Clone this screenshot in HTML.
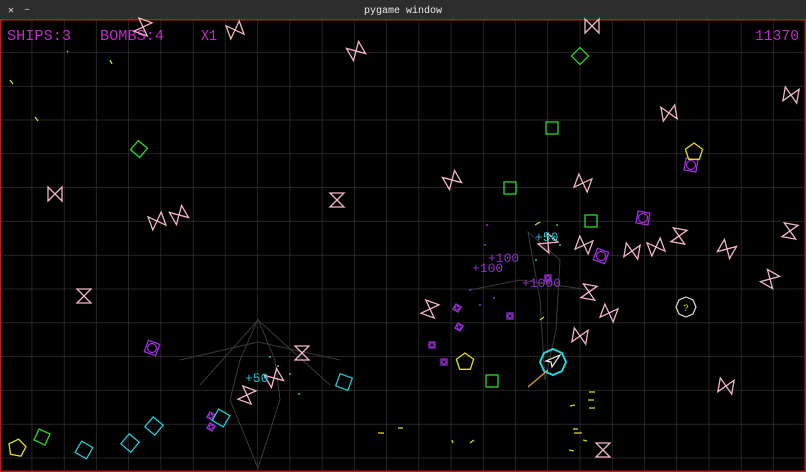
<!DOCTYPE html>
<html><head><meta charset="utf-8"><style>
html,body{margin:0;padding:0;background:#000;width:806px;height:472px;overflow:hidden}
svg{display:block}
text{font-family:"Liberation Mono",monospace}
</style></head><body>
<svg width="806" height="472" viewBox="0 0 806 472" xmlns="http://www.w3.org/2000/svg">
<defs>
<pattern id="grid" x="0" y="18.9" width="32.24" height="33.8" patternUnits="userSpaceOnUse">
<path d="M32.24 0V33.8M0 33.8H32.24" stroke="#3a3a3a" stroke-width="1.2" fill="none"/>
</pattern>
<g id="bt"><path d="M-7 -7L7 -7L-7 7L7 7Z" fill="none" stroke="#f2b6c6" stroke-width="1.3"/></g>
<g id="gs"><rect x="-6" y="-6" width="12" height="12" fill="none" stroke="#2ed62e" stroke-width="1.3"/></g>
<g id="cs"><rect x="-6.5" y="-6.5" width="13" height="13" fill="none" stroke="#22c8d0" stroke-width="1.3"/></g>
<g id="ps"><rect x="-6" y="-6" width="12" height="12" fill="none" stroke="#a030e0" stroke-width="1.3"/><circle r="4.5" fill="none" stroke="#a030e0" stroke-width="1.2"/></g>
<g id="pss"><rect x="-3" y="-3" width="6" height="6" fill="none" stroke="#a030e0" stroke-width="1.2"/><circle r="2" fill="none" stroke="#a030e0"/></g>
<g id="yp"><path d="M0 -9L8.6 -2.8L5.3 7.3L-5.3 7.3L-8.6 -2.8Z" fill="none" stroke="#e0e020" stroke-width="1.3"/></g>
</defs>
<rect width="806" height="472" fill="#000"/>
<rect x="0" y="20" width="806" height="452" fill="url(#grid)"/>
<g stroke="#3a3a3a" fill="none" stroke-width="1">
<path d="M258 319L240 360L230 400L258 468L280 400L275 360Z"/>
<path d="M180 360L258 342L340 360"/>
<path d="M200 385L258 320L330 385"/>
<path d="M528 232L540 300L545 380L556 330L560 260Z"/>
<path d="M470 290L520 280L590 290"/>
</g>
<rect x="0" y="0" width="806" height="19" fill="#2d2d2d"/>
<text x="8" y="13" fill="#ddd" font-size="10" font-family="Liberation Sans">✕</text>
<text x="24" y="12" fill="#ddd" font-size="10" font-family="Liberation Sans">–</text>
<text x="403" y="13" fill="#e8e8e8" font-size="10" text-anchor="middle" font-family="Liberation Sans,sans-serif">pygame window</text>
<rect x="0.75" y="19.75" width="804.5" height="451.5" fill="none" stroke="#b41e1e" stroke-width="1.5"/>
<g fill="#c02cc8" font-size="15">
<text x="7" y="40" textLength="64" lengthAdjust="spacingAndGlyphs">SHIPS:3</text>
<text x="100" y="40" textLength="64" lengthAdjust="spacingAndGlyphs">BOMBS:4</text>
<text x="201" y="40" textLength="16" lengthAdjust="spacingAndGlyphs">X1</text>
<text x="755" y="40" textLength="44" lengthAdjust="spacingAndGlyphs">11370</text>
</g>
<use href="#bt" transform="translate(143,27) rotate(20)"/>
<use href="#bt" transform="translate(235,30) rotate(70)"/>
<use href="#bt" transform="translate(356,51) rotate(60)"/>
<use href="#bt" transform="translate(592,26) rotate(90)"/>
<use href="#bt" transform="translate(791,95) rotate(100)"/>
<use href="#bt" transform="translate(669,113) rotate(80)"/>
<use href="#bt" transform="translate(55,194) rotate(90)"/>
<use href="#bt" transform="translate(157,221) rotate(70)"/>
<use href="#bt" transform="translate(179,215) rotate(60)"/>
<use href="#bt" transform="translate(337,200) rotate(0)"/>
<use href="#bt" transform="translate(452,180) rotate(60)"/>
<use href="#bt" transform="translate(583,183) rotate(110)"/>
<use href="#bt" transform="translate(679,236) rotate(10)"/>
<use href="#bt" transform="translate(727,249) rotate(120)"/>
<use href="#bt" transform="translate(790,231) rotate(10)"/>
<use href="#bt" transform="translate(632,251) rotate(100)"/>
<use href="#bt" transform="translate(656,247) rotate(70)"/>
<use href="#bt" transform="translate(584,245) rotate(110)"/>
<use href="#bt" transform="translate(548,243) rotate(40)"/>
<use href="#bt" transform="translate(770,279) rotate(30)"/>
<use href="#bt" transform="translate(84,296) rotate(0)"/>
<use href="#bt" transform="translate(430,309) rotate(20)"/>
<use href="#bt" transform="translate(589,292) rotate(10)"/>
<use href="#bt" transform="translate(609,313) rotate(110)"/>
<use href="#bt" transform="translate(580,336) rotate(100)"/>
<use href="#bt" transform="translate(302,353) rotate(0)"/>
<use href="#bt" transform="translate(274,378) rotate(60)"/>
<use href="#bt" transform="translate(247,395) rotate(20)"/>
<use href="#bt" transform="translate(726,386) rotate(100)"/>
<use href="#bt" transform="translate(603,450) rotate(0)"/>
<use href="#gs" transform="translate(580,56) rotate(45)"/>
<use href="#gs" transform="translate(552,128)"/>
<use href="#gs" transform="translate(139,149) rotate(40)"/>
<use href="#gs" transform="translate(510,188)"/>
<use href="#gs" transform="translate(591,221)"/>
<use href="#gs" transform="translate(492,381)"/>
<use href="#gs" transform="translate(42,437) rotate(25)"/>
<use href="#ps" transform="translate(691,165) rotate(10)"/>
<use href="#ps" transform="translate(643,218) rotate(10)"/>
<use href="#ps" transform="translate(601,256) rotate(20)"/>
<use href="#ps" transform="translate(152,348) rotate(20)"/>
<use href="#pss" transform="translate(457,308) rotate(30)"/>
<use href="#pss" transform="translate(459,327) rotate(30)"/>
<use href="#pss" transform="translate(432,345)"/>
<use href="#pss" transform="translate(444,362)"/>
<use href="#pss" transform="translate(510,316)"/>
<use href="#pss" transform="translate(548,278)"/>
<use href="#pss" transform="translate(211,416) rotate(30)"/>
<use href="#pss" transform="translate(211,427) rotate(30)"/>
<use href="#cs" transform="translate(344,382) rotate(20)"/>
<use href="#cs" transform="translate(221,418) rotate(30)"/>
<use href="#cs" transform="translate(154,426) rotate(40)"/>
<use href="#cs" transform="translate(130,443) rotate(40)"/>
<use href="#cs" transform="translate(84,450) rotate(30)"/>
<use href="#yp" transform="translate(694,152)"/>
<use href="#yp" transform="translate(465,362)"/>
<use href="#yp" transform="translate(17,448) rotate(10)"/>
<path d="M686 297L693 300L696 307L693 314L686 317L679 314L676 307L679 300Z" fill="none" stroke="#ddd" stroke-width="1.2"/>
<text x="686" y="311" fill="#c8c820" font-size="10" text-anchor="middle">?</text>
<path d="M553 349L562 353L566 362L562 371L553 375L544 371L540 362L544 353Z" fill="none" stroke="#22d8e0" stroke-width="2"/>
<path d="M560 355L546 361L551 362L552 367Z" fill="none" stroke="#eee" stroke-width="1.2"/>
<line x1="528" y1="387" x2="548" y2="370" stroke="#e0a020" stroke-width="1.3"/>
<g font-size="13">
<text x="535" y="241" fill="#22c0c8">+50</text>
<text x="245" y="382" fill="#22c0c8">+50</text>
<text x="488" y="262" fill="#9030d0">+100</text>
<text x="472" y="272" fill="#9030d0">+100</text>
<text x="522" y="287" fill="#9030d0">+1000</text>
</g>
<g stroke="#d8d820" stroke-width="1.3">
<line x1="10" y1="80" x2="13" y2="84"/><line x1="35" y1="117" x2="38" y2="121"/>
<line x1="110" y1="60" x2="112" y2="64"/><line x1="67" y1="51" x2="68" y2="52"/>
<line x1="535" y1="225" x2="540" y2="222"/><line x1="540" y1="320" x2="544" y2="317"/>
<line x1="589" y1="392" x2="595" y2="392"/><line x1="588" y1="400" x2="594" y2="400"/>
<line x1="589" y1="408" x2="595" y2="408"/><line x1="570" y1="406" x2="575" y2="405"/>
<line x1="573" y1="429" x2="578" y2="429"/><line x1="574" y1="433" x2="582" y2="433"/>
<line x1="583" y1="440" x2="587" y2="441"/><line x1="569" y1="450" x2="574" y2="451"/>
<line x1="378" y1="433" x2="384" y2="433"/><line x1="398" y1="428" x2="403" y2="428"/>
<line x1="452" y1="440" x2="453" y2="443"/><line x1="470" y1="443" x2="474" y2="440"/>
</g>
<g fill="#22c0c8">
<circle cx="270" cy="357" r="1"/><circle cx="278" cy="366" r="1"/><circle cx="290" cy="374" r="1"/><circle cx="299" cy="394" r="1"/>
<circle cx="557" cy="225" r="1"/><circle cx="560" cy="245" r="1"/><circle cx="536" cy="260" r="1"/>
</g>
<g fill="#9030d0">
<circle cx="487" cy="225" r="1"/><circle cx="485" cy="245" r="1"/><circle cx="470" cy="290" r="1"/><circle cx="494" cy="298" r="1"/><circle cx="480" cy="305" r="1"/>
</g>
</svg>
</body></html>
